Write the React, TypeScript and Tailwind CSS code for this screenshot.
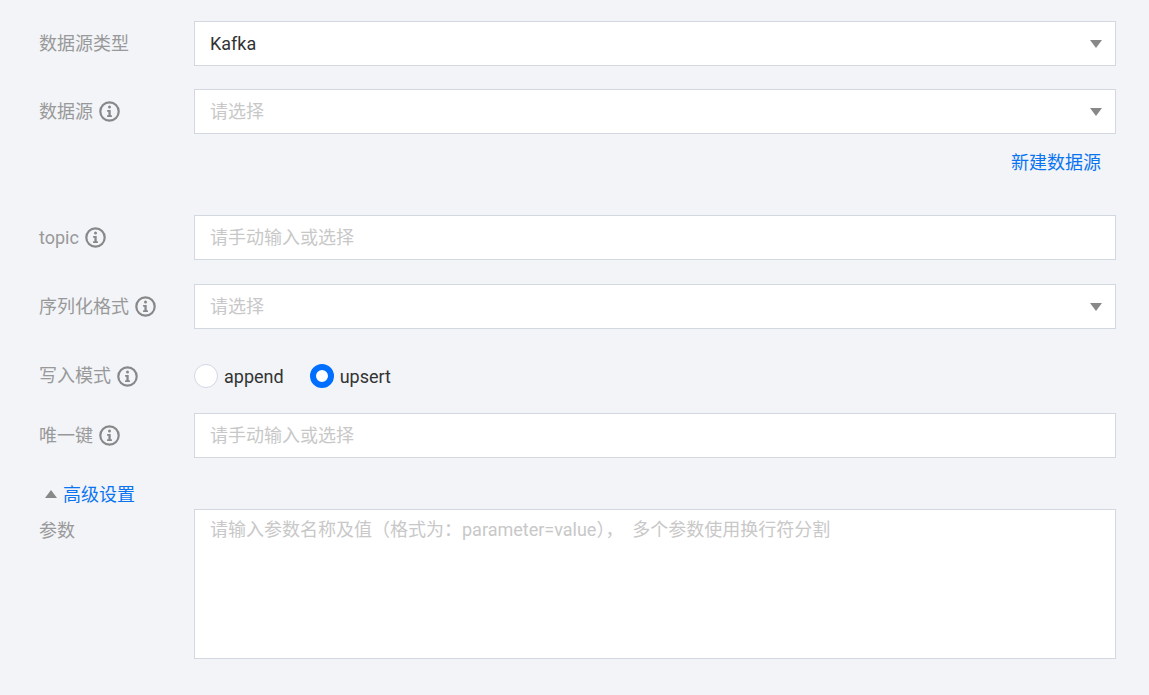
import React from 'react';

const font = { fontFamily: 'Roboto, "Noto Sans CJK SC", sans-serif' };

const InfoIcon = () => (
  <svg width="21" height="21" viewBox="0 0 21 21" className="ml-[6px] shrink-0">
    <circle cx="10.5" cy="10.5" r="9.2" fill="none" stroke="#888888" strokeWidth="2.2" />
    <circle cx="10.5" cy="6.1" r="1.5" fill="#888888" />
    <path d="M8.1 9h3.6v5.3h1.2v1.7H8.1v-1.7h1.3v-3.6H8.1z" fill="#888888" />
  </svg>
);

const Caret = () => (
  <svg width="12" height="8" viewBox="0 0 12 8" className="shrink-0">
    <path d="M0 0h12L6 8z" fill="#888888" />
  </svg>
);

const Label = ({ text, info }: { text: string; info?: boolean }) => (
  <div className="w-[155px] shrink-0 flex items-center text-[18px] leading-[24px] text-[#999999]">
    <span>{text}</span>
    {info && <InfoIcon />}
  </div>
);

const Field = ({ value, placeholder, caret }: { value?: string; placeholder?: string; caret?: boolean }) => (
  <div className="w-[922px] h-[45px] bg-white border border-[#d3d7e0] flex items-center justify-between pl-[15px] pr-[13px] text-[18px]">
    <span className={value ? 'text-[#333333]' : 'text-[#c8c8c8]'}>{value || placeholder}</span>
    {caret && <Caret />}
  </div>
);

const Row = ({ label, info, className, children }: { label: string; info?: boolean; className?: string; children: React.ReactNode }) => (
  <div className={`flex items-center ${className ?? ''}`}>
    <Label text={label} info={info} />
    {children}
  </div>
);

const App: React.FC = () => {
  return (
    <div className="w-[1149px] h-[695px] overflow-hidden bg-[#f2f4f8] pl-[39px] pt-[21px]" style={font}>
      <Row label="数据源类型">
        <Field value="Kafka" caret />
      </Row>
      <Row label="数据源" info className="mt-[23px]">
        <Field placeholder="请选择" caret />
      </Row>
      <div className="w-[1077px] mt-[15px] h-[26px] flex items-center justify-end pr-[15px] text-[18px] text-[#0a74f0]">
        新建数据源
      </div>
      <Row label="topic" info className="mt-[40px]">
        <Field placeholder="请手动输入或选择" />
      </Row>
      <Row label="序列化格式" info className="mt-[24px]">
        <Field placeholder="请选择" caret />
      </Row>

      {/* write mode */}
      <div className="flex items-center mt-[34px] h-[26px]">
        <Label text="写入模式" info />
        <div className="flex items-center text-[18px] text-[#333333]">
          <span className="w-[24px] h-[24px] rounded-full bg-white border border-[#d3d7e0]" />
          <span className="ml-[6px]">append</span>
          <span className="ml-[26px] w-[24px] h-[24px] rounded-full bg-white border-[6px] border-[#006eff]" />
          <span className="ml-[6px]">upsert</span>
        </div>
      </div>

      <Row label="唯一键" info className="mt-[24px]">
        <Field placeholder="请手动输入或选择" />
      </Row>

      {/* advanced settings */}
      <div className="flex items-center h-[24px] mt-[24px] pl-[6px] text-[18px] text-[#0a74f0]">
        <svg width="12" height="8" viewBox="0 0 12 8" className="shrink-0 mr-[6px]">
          <path d="M6 0l6 8H0z" fill="#888888" />
        </svg>
        高级设置
      </div>

      <div className="flex items-start mt-[3px]">
        <div className="w-[155px] pt-[10px] text-[18px] leading-[24px] text-[#999999]">参数</div>
        <div className="w-[922px] h-[150px] bg-white border border-[#d3d7e0] pl-[15px] pt-[7px] text-[18px] leading-[26px] text-[#c8c8c8]">
          请输入参数名称及值（格式为：parameter=value），&nbsp;&nbsp;多个参数使用换行符分割
        </div>
      </div>
    </div>
  );
};

export default App;
